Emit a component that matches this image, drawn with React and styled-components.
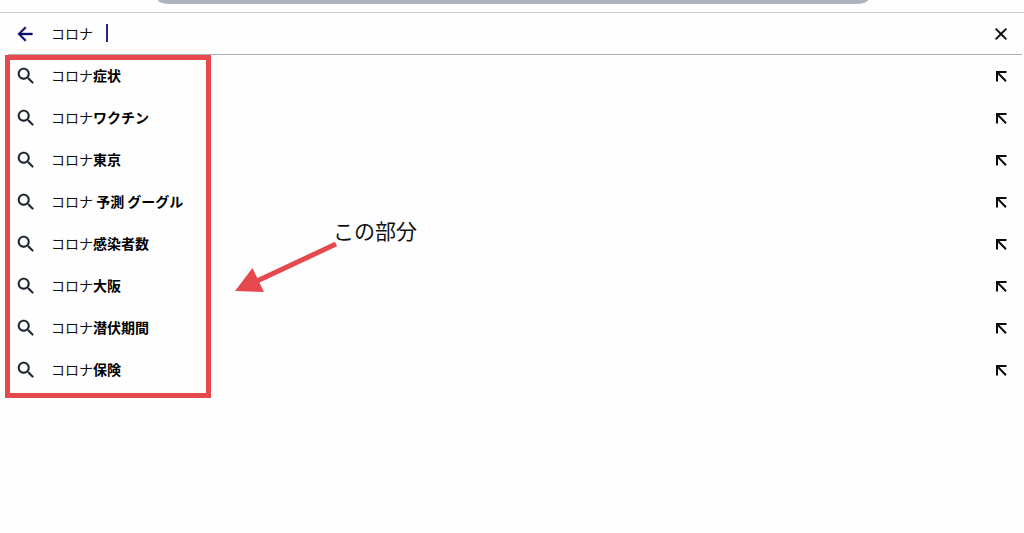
import React, { useState } from 'react';
import styled, { createGlobalStyle } from 'styled-components';
import { MdArrowBack, MdClose, MdSearch } from 'react-icons/md';

const suggestions = [
    '症状',
    'ワクチン',
    '東京',
    ' 予測 グーグル',
    '感染者数',
    '大阪',
    '潜伏期間',
    '保険',
];

const App = () => {
    const [query, setQuery] = useState('コロナ');

    return (
        <Page>
            <GlobalStyle />
            <TopBar>
                <AddressBar />
            </TopBar>
            <SearchBar onSubmit={(e) => e.preventDefault()}>
                <IconButton type='button' $color='#0c0c70' aria-label='戻る'>
                    <MdArrowBack size={22} />
                </IconButton>
                <Field>
                    <input
                        type='text'
                        aria-label='検索'
                        value={query}
                        onChange={(e) => setQuery(e.target.value)}
                    />
                    <Caret />
                </Field>
                <IconButton type='button' aria-label='クリア'>
                    <MdClose size={20} />
                </IconButton>
            </SearchBar>
            <Results>
                <List>
                    {suggestions.map((word) => (
                        <Row key={word}>
                            <Suggestion href='#'>
                                <MdSearch size={22} />
                                <span>コロナ<b>{word}</b></span>
                            </Suggestion>
                            <IconButton type='button' aria-label={`コロナ${word}を入力`}>
                                <FillArrow />
                            </IconButton>
                        </Row>
                    ))}
                </List>
                <Highlight />
                <Pointer viewBox='0 0 104 52' aria-hidden='true'>
                    <path d='M101 3L22 40' stroke='#e5484d' strokeWidth='5' />
                    <path d='M0 50L17.500 27L29 51Z' fill='#e5484d' />
                </Pointer>
                <Note>この部分</Note>
            </Results>
            <Footer />
        </Page>
    );
};

const FillArrow = () => (
    <svg width='20' height='20' viewBox='0 0 20 20' fill='none'>
        <path d='M6 15.500V6H15.500M6 6L15 15.300' stroke='currentColor' strokeWidth='2' />
    </svg>
);

const GlobalStyle = createGlobalStyle`
*{
    box-sizing: border-box;
}
body{
    margin: 0;
    background-color: #fefefe;
    color: #111;
    font-family: 'Noto Sans CJK JP', sans-serif;
    font-size: 14px;
}
`
const Page = styled.div`
display: flex;
flex-direction: column;
min-height: 100vh;
`
const TopBar = styled.div`
padding: 0 156px 8px 158px;
border-bottom: 1px solid #c8c8c8;
`
const AddressBar = styled.div`
height: 4px;
background-color: #adb4c0;
border-radius: 0 0 12px 12px / 0 0 4px 4px;
`
const SearchBar = styled.form`
display: flex;
align-items: center;
height: 42px;
margin: 0 2px 0 8px;
padding: 0 11px 0 6px;
border-bottom: 1px solid #b0b0b0;
`
const IconButton = styled.button`
display: flex;
flex: none;
padding: 0;
border: none;
background: none;
color: ${(props) => props.$color || '#0c0c0c'};
cursor: pointer;
svg{
    stroke-width: 0.5px;
}
path[fill='none']{
    stroke: none;
}
`
const Field = styled.div`
position: relative;
flex: 1;
margin-left: 15px;
input{
    display: block;
    width: 100%;
    padding: 0 0 2px;
    border: none;
    outline: none;
    background: none;
    color: inherit;
    font: inherit;
    line-height: 20px;
}
`
const Caret = styled.span`
position: absolute;
left: 55px;
top: 1px;
width: 2px;
height: 18px;
background-color: #23238a;
`
const Results = styled.section`
position: relative;
`
const List = styled.ul`
margin: 0;
padding: 0;
list-style: none;
`
const Row = styled.li`
display: flex;
align-items: center;
height: 42px;
padding: 0 13px 0 15px;
`
const Suggestion = styled.a`
display: flex;
flex: 1;
align-items: center;
gap: 14px;
color: #111;
line-height: 20px;
text-decoration: none;
white-space: pre;
svg{
    color: #17202b;
    stroke-width: 0.2px;
}
path[fill='none']{
    stroke: none;
}
span{
    padding-bottom: 2px;
}
b{
    color: #000;
    font-weight: 700;
}
`
/* red marks drawn over the list */
const Highlight = styled.div`
position: absolute;
top: 0;
left: 5px;
width: 206px;
bottom: -7px;
border: 5px solid #e5484d;
pointer-events: none;
`
const Pointer = styled.svg`
position: absolute;
top: 186px;
left: 235px;
width: 104px;
height: 52px;
`
const Note = styled.p`
position: absolute;
top: 160px;
left: 333px;
margin: 0;
font-size: 21px;
line-height: 30px;
`
const Footer = styled.footer`
height: 8px;
margin-top: auto;
border-top: 1px solid #fafafa;
`

export default App;
